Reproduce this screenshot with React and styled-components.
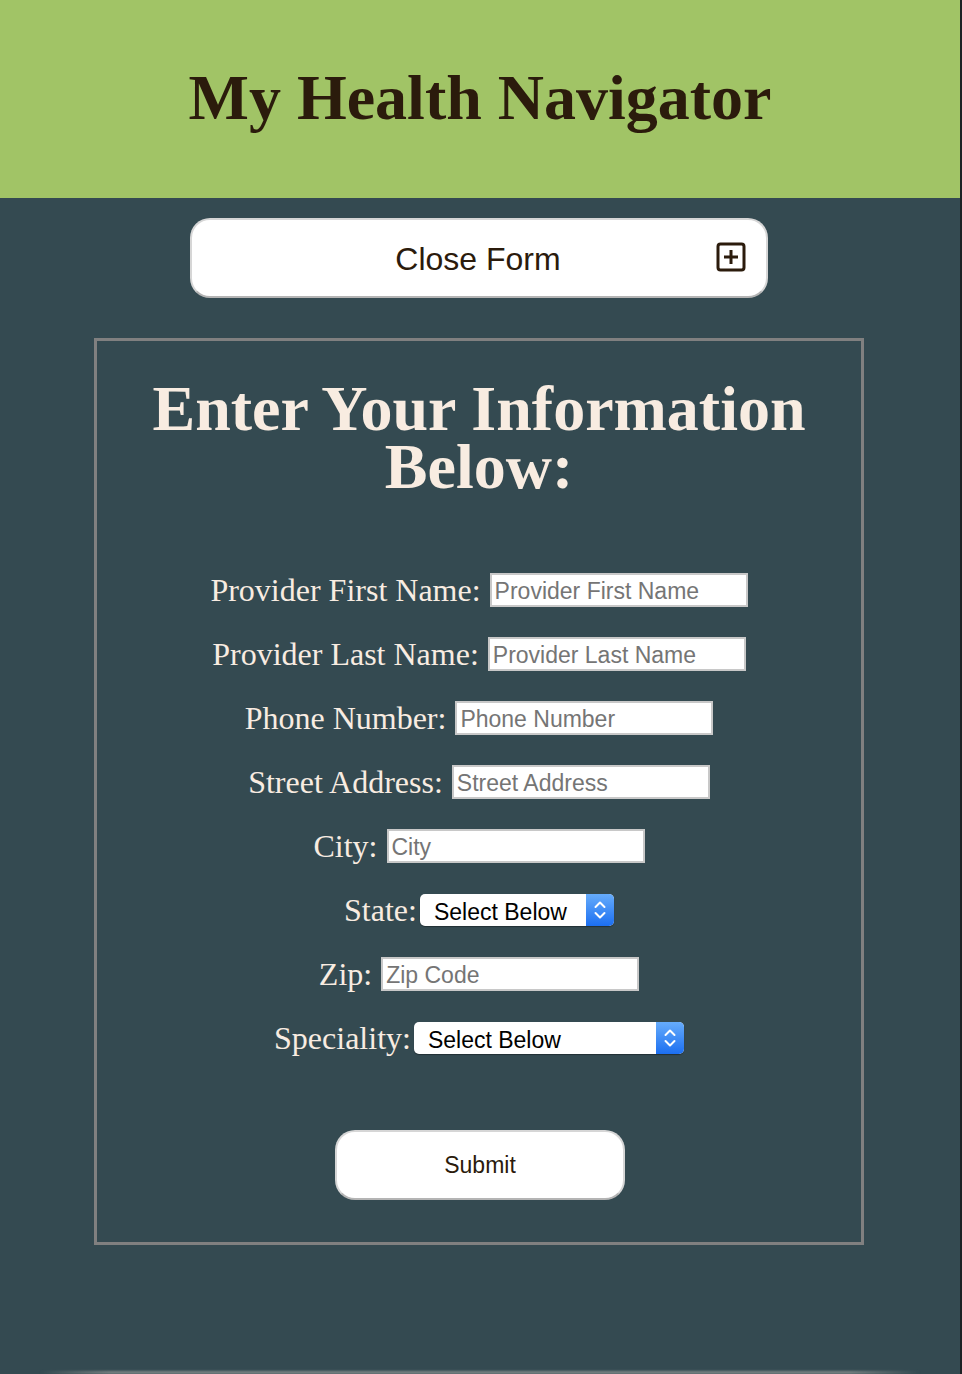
import React from 'react';
import styled, { createGlobalStyle } from 'styled-components';

const GlobalStyle = createGlobalStyle`
  html, body {
    margin: 0;
    padding: 0;
    background: #344a51;
  }
  body {
    font-family: "Liberation Serif", "Times New Roman", serif;
  }
`;

const fields = [
  { label: 'Provider First Name:', placeholder: 'Provider First Name' },
  { label: 'Provider Last Name:', placeholder: 'Provider Last Name' },
  { label: 'Phone Number:', placeholder: 'Phone Number' },
  { label: 'Street Address:', placeholder: 'Street Address' },
  { label: 'City:', placeholder: 'City' },
  { label: 'State:', select: 194 },
  { label: 'Zip:', placeholder: 'Zip Code' },
  { label: 'Speciality:', select: 270 },
];

function PlusSquare() {
  return (
    <svg width="30" height="30" viewBox="0 0 30 30" fill="none">
      <rect x="2" y="2" width="26" height="26" rx="2.5" stroke="#2b1b0c" strokeWidth="3" />
      <path d="M15 8v14M8 15h14" stroke="#2b1b0c" strokeWidth="3" />
    </svg>
  );
}

function Chevrons() {
  return (
    <svg width="14" height="24" viewBox="0 0 14 24" fill="none">
      <path d="M2.5 9L7 4.5L11.5 9M2.5 15L7 19.5L11.5 15" stroke="#fff" strokeWidth="2" strokeLinecap="round" strokeLinejoin="round" />
    </svg>
  );
}

function FieldRow(props) {
  return (
    <Row>
      <Label tight={!!props.select}>{props.label}</Label>
      {props.select ? (
        <SelectWrap w={props.select}>
          <SelectBox defaultValue="">
            <option value="">Select Below</option>
          </SelectBox>
          <ArrowBox><Chevrons /></ArrowBox>
        </SelectWrap>
      ) : (
        <TextInput type="text" placeholder={props.placeholder} />
      )}
    </Row>
  );
}

function App() {
  return (
    <Page>
      <GlobalStyle />
      <Header>
        <Title>My Health Navigator</Title>
      </Header>
      <Main>
        <ToggleButton>
          <ToggleText>Close Form</ToggleText>
          <ToggleIcon><PlusSquare /></ToggleIcon>
        </ToggleButton>
        <FormBox>
          <FormHeading>Enter Your Information Below:</FormHeading>
          <Rows>
            {fields.map((f) => (
              <FieldRow key={f.label} label={f.label} placeholder={f.placeholder} select={f.select} />
            ))}
          </Rows>
          <SubmitButton>Submit</SubmitButton>
        </FormBox>
      </Main>
      <BottomGlow />
    </Page>
  );
}

const Page = styled.div`
  width: 960px;
  min-height: 1374px;
  background: #344a51;
  border-right: 2px solid #1d2225;
  display: flex;
  flex-direction: column;
  overflow: hidden;
`;

const Header = styled.header`
  height: 198px;
  background: #a1c466;
  display: flex;
  align-items: center;
  justify-content: center;
`;

const Title = styled.h1`
  margin: 0;
  padding-bottom: 2px;
  font-family: "Liberation Serif", "Times New Roman", serif;
  font-weight: bold;
  font-size: 64px;
  color: #2b1b0c;
`;

const Main = styled.main`
  display: flex;
  flex-direction: column;
  align-items: center;
  padding-top: 20px;
  flex: 1;
`;

const ToggleButton = styled.button`
  box-sizing: border-box;
  width: 578px;
  height: 80px;
  margin-right: 2px;
  background: #fff;
  border: 2px solid #d6d6d6;
  border-bottom-color: #b4b4b4;
  border-radius: 20px;
  display: flex;
  align-items: center;
  justify-content: center;
  position: relative;
  cursor: pointer;
  padding: 3px 0 0;
`;

const ToggleText = styled.span`
  font-family: "Liberation Sans", Arial, sans-serif;
  font-size: 32px;
  color: #2b1b0c;
  margin-right: 2px;
`;

const ToggleIcon = styled.span`
  position: absolute;
  right: 20px;
  top: 22px;
  display: flex;
`;

const FormBox = styled.section`
  box-sizing: border-box;
  width: 770px;
  margin-top: 40px;
  margin-right: 2px;
  border: 3px solid #808080;
  display: flex;
  flex-direction: column;
  align-items: center;
  padding: 39px 0 42px;
`;

const FormHeading = styled.h2`
  margin: 0;
  font-family: "Liberation Serif", "Times New Roman", serif;
  font-weight: bold;
  font-size: 64px;
  line-height: 58px;
  text-align: center;
  color: #f8ece1;
  width: 720px;
`;

const Rows = styled.div`
  display: flex;
  flex-direction: column;
  align-items: center;
  gap: 30px;
  margin-top: 77px;
  width: 100%;
`;

const Row = styled.div`
  display: flex;
  align-items: center;
  justify-content: center;
  height: 34px;
`;

const Label = styled.label`
  font-family: "Liberation Serif", "Times New Roman", serif;
  font-size: 32px;
  color: #f8ece1;
  white-space: nowrap;
  margin-right: ${(p) => (p.tight ? '3px' : '9px')};
`;

const TextInput = styled.input`
  box-sizing: border-box;
  width: 258px;
  height: 34px;
  border: 2px solid #c8c8c8;
  background: #fff;
  padding: 3px 3px 0;
  font-family: "Liberation Sans", Arial, sans-serif;
  font-size: 23px;
  color: #333;
  outline: none;
  &::placeholder {
    color: #757575;
  }
`;

const SelectWrap = styled.span`
  position: relative;
  display: inline-flex;
  width: ${(p) => p.w}px;
  height: 32px;
  border-radius: 5px;
  background: #fff;
  box-shadow: 0 1px 1px rgba(0, 0, 0, 0.35);
`;

const SelectBox = styled.select`
  appearance: none;
  -webkit-appearance: none;
  border: none;
  background: transparent;
  width: 100%;
  height: 100%;
  padding: 3px 0 0 14px;
  font-family: "Liberation Sans", Arial, sans-serif;
  font-size: 23px;
  color: #000;
  outline: none;
`;

const ArrowBox = styled.span`
  position: absolute;
  right: 0;
  top: 0;
  width: 28px;
  height: 32px;
  border-radius: 0 5px 5px 0;
  background: linear-gradient(#66acfb, #1c6ff1);
  display: flex;
  align-items: center;
  justify-content: center;
  pointer-events: none;
`;

const SubmitButton = styled.button`
  box-sizing: border-box;
  width: 290px;
  height: 70px;
  margin-top: 75px;
  margin-left: 2px;
  background: #fff;
  border: 2px solid #d6d6d6;
  border-bottom-color: #b4b4b4;
  border-radius: 20px;
  font-family: "Liberation Sans", Arial, sans-serif;
  font-size: 23px;
  color: #2b1b0c;
  cursor: pointer;
`;

const BottomGlow = styled.div`
  height: 3px;
  margin: 0 40px;
  background: linear-gradient(90deg, rgba(120,130,130,0), #7c8686 8%, #7c8686 92%, rgba(120,130,130,0));
  filter: blur(1px);
`;

export default App;
